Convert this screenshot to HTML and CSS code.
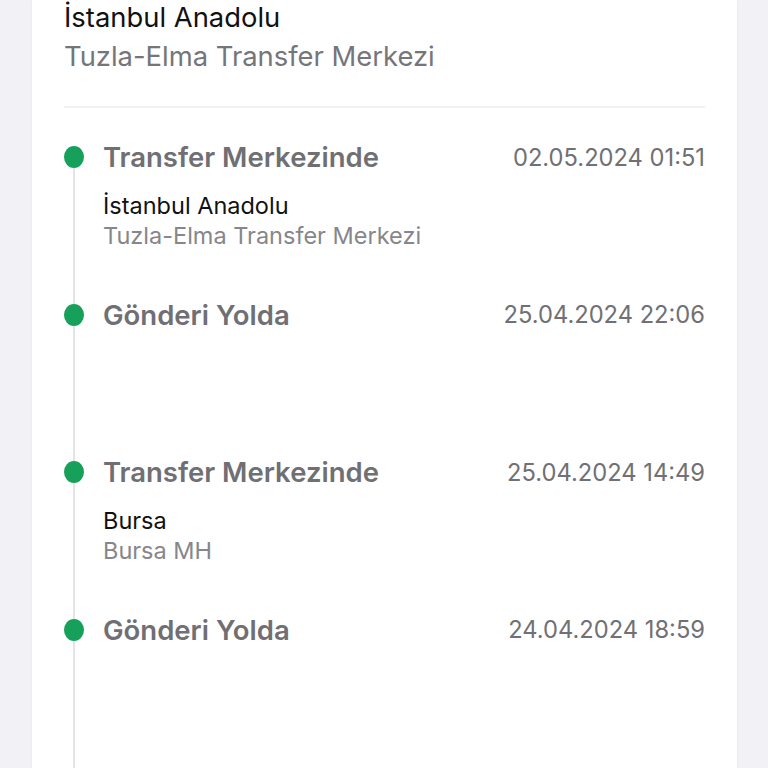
FILE: index.html
```html
<!DOCTYPE html>
<html lang="tr">
<head>
    <meta charset="UTF-8">
    <meta name="viewport" content="width=device-width, initial-scale=1.0">
    <title>Gönderi Takibi</title>
    <link rel="stylesheet" href="styles.css">
</head>
<body>
    <main class="card">
        <section class="head">
            <div class="head-title">İstanbul Anadolu</div>
            <div class="head-sub">Tuzla-Elma Transfer Merkezi</div>
        </section>

        <ul class="timeline">
            <li class="event first">
                <div class="marker"><span class="dot"></span></div>
                <div class="body">
                    <div class="row">
                        <span class="status">Transfer Merkezinde</span>
                        <span class="date">02.05.2024 01:51</span>
                    </div>
                    <div class="place">İstanbul Anadolu</div>
                    <div class="branch">Tuzla-Elma Transfer Merkezi</div>
                </div>
            </li>
            <li class="event">
                <div class="marker"><span class="dot"></span></div>
                <div class="body">
                    <div class="row">
                        <span class="status">Gönderi Yolda</span>
                        <span class="date">25.04.2024 22:06</span>
                    </div>
                </div>
            </li>
            <li class="event">
                <div class="marker"><span class="dot"></span></div>
                <div class="body">
                    <div class="row">
                        <span class="status">Transfer Merkezinde</span>
                        <span class="date">25.04.2024 14:49</span>
                    </div>
                    <div class="place">Bursa</div>
                    <div class="branch">Bursa MH</div>
                </div>
            </li>
            <li class="event">
                <div class="marker"><span class="dot"></span></div>
                <div class="body">
                    <div class="row">
                        <span class="status">Gönderi Yolda</span>
                        <span class="date">24.04.2024 18:59</span>
                    </div>
                </div>
            </li>
        </ul>
    </main>
</body>
</html>
```

FILE: styles.css
```css
body {
    font-family: Inter, "Noto Sans", sans-serif;
    margin: 0;
    padding: 0;
    background-color: #f2f2f6;
    height: 768px;
    overflow: hidden;
}
.card {
    width: 641px;
    margin-left: 32px;
    padding: 2px 32px 0;
    background-color: #fff;
    box-shadow: 0 0 3px rgba(0, 0, 0, 0.06);
    min-height: 766px;
}
.head {
    padding-bottom: 35px;
    border-bottom: 2px solid #f1f1f3;
}
.head-title {
    font-size: 27.4px;
    line-height: 30px;
    color: #111;
}
.head-sub {
    margin-top: 9px;
    font-size: 27.4px;
    line-height: 30px;
    color: #75757a;
}
.timeline {
    list-style: none;
    margin: 0;
    padding: 34px 0 0;
}
.event {
    display: grid;
    grid-template-columns: 20px 1fr;
    column-gap: 19px;
    height: 157.5px;
}
.marker {
    display: flex;
    justify-content: center;
    padding-top: 4px;
    background: linear-gradient(#e4e4e8, #e4e4e8) center top / 2px 100% no-repeat;
}
.first .marker {
    background-position: center bottom;
    background-size: 2px calc(100% - 15px);
}
.dot {
    width: 22px;
    height: 22px;
    border-radius: 50%;
    background-color: #16a05a;
}
.row {
    display: flex;
    justify-content: space-between;
    align-items: center;
    height: 30px;
}
.status {
    font-size: 27.5px;
    font-weight: 600;
    color: #6f6f74;
}
.date {
    font-size: 23.7px;
    color: #707075;
}
.place {
    margin-top: 19px;
    font-size: 23.5px;
    line-height: 30px;
    color: #111;
}
.branch {
    font-size: 23.5px;
    line-height: 30px;
    color: #86868b;
}
```
